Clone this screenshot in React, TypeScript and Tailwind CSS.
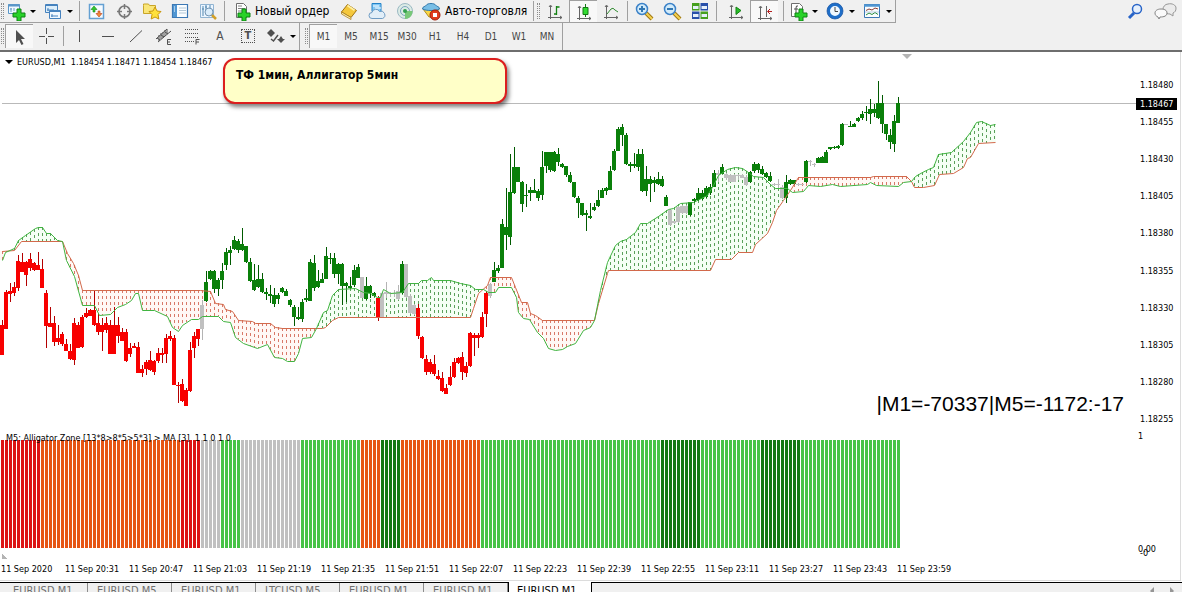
import React from "react";

type Candle = [number, number, number, number, string?];
type Point = [number, number];

const COLORS: Record<string, string> = {
    r: "#f80000",
    g: "#0a800a",
    s: "#c0c0c0",
};

const WICKS: Record<string, string> = {
    r: "#b40000",
    g: "#005a00",
    s: "#b4b4b4",
};

// high, body top, body bottom, low - trend colour carries on until the next letter
const CANDLES: Candle[] = [
    [320, 325, 355, 355, "r"], [290, 292, 329, 329], [283, 291, 294, 302], [282, 287, 293, 296], [255, 261, 288, 291],
    [253, 262, 272, 272], [261, 262, 275, 286], [253, 259, 268, 271], [262, 263, 270, 271], [252, 265, 270, 270],
    [259, 269, 288, 288], [290, 293, 326, 348], [307, 323, 327, 327], [316, 323, 342, 346], [325, 338, 342, 345],
    [332, 334, 344, 346], [339, 344, 351, 351], [344, 351, 359, 360], [318, 323, 360, 365], [322, 325, 348, 348],
    [315, 317, 347, 348], [308, 313, 317, 318], [309, 310, 316, 316], [290, 310, 325, 326], [313, 323, 332, 335],
    [318, 325, 332, 351], [317, 323, 330, 333], [320, 325, 354, 354], [307, 325, 354, 354], [317, 325, 336, 343],
    [328, 332, 341, 341], [329, 332, 361, 362], [343, 348, 354, 357], [343, 346, 348, 348], [342, 347, 373, 373],
    [365, 369, 373, 377], [360, 362, 369, 375], [351, 360, 370, 371], [360, 361, 372, 375], [348, 353, 361, 363],
    [348, 353, 355, 363], [334, 338, 354, 363], [331, 336, 339, 341], [335, 338, 385, 385], [382, 385, 386, 403],
    [379, 384, 401, 402], [388, 390, 406, 406], [342, 350, 391, 392], [332, 336, 348, 358], [329, 329, 339, 346],
    [300, 305, 329, 340, "s"], [271, 282, 301, 302, "g"], [270, 271, 279, 280], [270, 271, 289, 293], [278, 280, 289, 296],
    [263, 271, 280, 289], [248, 252, 265, 270], [246, 250, 253, 265], [236, 240, 249, 250], [239, 241, 250, 253],
    [228, 244, 250, 251], [246, 246, 262, 263], [258, 262, 281, 282], [264, 280, 290, 291], [265, 279, 287, 288],
    [273, 279, 292, 293], [288, 292, 294, 300], [285, 294, 296, 303], [288, 295, 304, 307], [293, 295, 299, 304],
    [287, 288, 292, 293], [289, 291, 296, 296], [299, 300, 305, 307], [305, 307, 317, 326], [307, 317, 319, 320],
    [299, 302, 319, 322], [289, 298, 300, 302], [259, 262, 301, 301], [255, 263, 288, 291], [270, 281, 287, 288],
    [273, 279, 283, 283], [247, 256, 279, 279], [253, 258, 259, 264], [253, 258, 274, 278], [263, 264, 274, 284],
    [263, 264, 286, 305], [282, 283, 286, 302], [277, 286, 288, 289], [265, 270, 285, 287], [264, 267, 278, 278],
    [277, 277, 298, 298, "s"], [277, 286, 299, 300, "g"], [285, 286, 293, 298], [292, 293, 296, 297], [296, 298, 318, 321, "r"],
    [292, 293, 317, 317, "s"], [282, 292, 294, 298], [292, 293, 294, 297], [290, 293, 294, 297], [285, 291, 299, 300],
    [261, 264, 293, 294, "g"], [264, 264, 297, 298, "s"], [294, 296, 313, 314], [304, 305, 314, 315], [304, 308, 336, 339, "r"],
    [336, 337, 358, 359], [355, 359, 372, 375], [359, 362, 372, 374], [355, 364, 374, 376], [370, 376, 379, 380],
    [372, 378, 391, 392], [384, 388, 394, 394], [366, 377, 385, 386], [358, 362, 377, 378], [357, 358, 363, 364],
    [352, 357, 372, 380], [362, 366, 373, 377], [332, 333, 366, 367], [333, 335, 338, 356], [333, 335, 338, 348],
    [312, 317, 337, 338], [291, 293, 314, 327], [283, 284, 296, 298, "s"], [262, 270, 282, 282, "g"], [265, 268, 271, 273],
    [219, 224, 268, 268], [188, 227, 235, 250], [154, 192, 237, 245], [147, 167, 193, 194], [167, 167, 182, 182],
    [181, 182, 204, 212], [184, 195, 196, 207], [187, 190, 193, 201], [179, 190, 193, 193], [189, 191, 198, 201],
    [151, 167, 195, 200], [152, 152, 166, 173], [152, 152, 170, 172], [151, 152, 171, 172], [148, 154, 162, 166],
    [163, 164, 167, 168], [166, 166, 175, 177], [172, 175, 182, 183], [182, 182, 197, 198], [196, 198, 203, 218],
    [203, 203, 215, 216], [210, 213, 215, 231], [203, 216, 218, 219], [203, 207, 210, 211], [190, 200, 206, 207],
    [188, 190, 198, 198], [187, 188, 191, 195], [166, 171, 190, 190], [149, 151, 170, 171], [127, 129, 151, 151],
    [124, 127, 135, 146], [133, 135, 164, 165], [162, 164, 166, 172], [153, 164, 166, 168], [149, 154, 167, 171],
    [149, 154, 191, 192], [166, 179, 191, 196], [176, 179, 184, 202], [177, 180, 183, 192], [172, 179, 184, 185],
    [176, 179, 186, 187], [195, 197, 206, 206], [209, 210, 225, 226, "s"], [221, 221, 223, 224], [206, 207, 222, 223],
    [205, 206, 213, 214], [205, 206, 213, 214], [202, 202, 215, 216, "g"], [198, 199, 201, 203], [188, 193, 200, 201],
    [190, 193, 199, 200], [186, 188, 197, 198], [184, 187, 193, 195], [170, 173, 187, 187], [170, 173, 175, 182, "s"],
    [164, 167, 174, 174, "g"], [173, 174, 178, 180, "s"], [174, 175, 182, 182], [174, 175, 182, 182], [174, 175, 176, 180],
    [174, 175, 178, 178], [175, 177, 185, 186], [171, 172, 182, 183, "g"], [162, 164, 171, 173], [163, 164, 170, 173],
    [166, 169, 174, 175], [172, 173, 177, 178], [172, 176, 181, 182], [183, 184, 185, 186, "s"], [179, 184, 185, 188],
    [185, 187, 198, 199], [175, 182, 198, 203, "g"], [179, 180, 184, 185], [180, 180, 184, 185], [183, 184, 185, 186, "s"],
    [184, 184, 185, 185], [160, 161, 182, 183, "g"], [160, 161, 162, 166, "s"], [163, 164, 165, 167], [157, 158, 163, 163, "g"],
    [156, 157, 163, 163], [150, 152, 163, 163], [147, 147, 149, 150], [146, 147, 148, 149], [145, 146, 148, 149],
    [123, 124, 145, 146], [124, 124, 125, 125, "s"], [121, 126, 127, 127, "g"], [123, 124, 127, 127], [117, 118, 121, 122],
    [111, 114, 118, 120], [106, 112, 113, 121], [99, 109, 114, 124], [104, 109, 113, 117], [81, 103, 118, 119],
    [95, 103, 124, 133], [124, 124, 134, 140], [129, 135, 142, 149], [115, 121, 144, 152], [97, 103, 123, 123],
];

const FAST: Point[] = [
    [2, 260], [5, 252], [14, 248], [18, 240], [25, 235], [35, 228], [38, 227], [42, 227], [46, 233], [50, 233], [57, 240],
    [62, 241], [66, 260], [74, 276], [82, 305], [94, 305], [99, 315], [110, 314], [117, 307], [125, 304], [131, 300],
    [135, 293], [138, 293], [142, 310], [154, 310], [167, 316], [172, 327], [178, 331], [182, 325], [191, 319], [198, 319],
    [202, 316], [218, 316], [223, 321], [230, 322], [235, 337], [243, 343], [257, 348], [267, 344], [274, 357], [282, 358],
    [287, 361], [294, 361], [298, 353], [302, 338], [311, 337], [316, 328], [323, 312], [327, 310], [332, 295], [338, 289],
    [355, 288], [363, 292], [370, 293], [377, 297], [380, 297], [383, 289], [390, 293], [402, 292], [408, 283], [418, 283],
    [421, 280], [427, 280], [431, 277], [433, 280], [450, 280], [460, 283], [470, 285], [475, 289], [483, 289], [488, 292],
    [495, 292], [498, 287], [511, 287], [516, 297], [518, 312], [523, 318], [529, 319], [537, 332], [543, 338], [548, 348],
    [555, 350], [562, 349], [567, 346], [575, 343], [583, 330], [590, 327], [594, 320], [600, 290], [607, 262], [615, 245],
    [620, 241], [626, 239], [635, 232], [640, 223], [647, 223], [658, 216], [668, 209], [673, 208], [680, 203], [693, 202],
    [707, 195], [713, 185], [718, 175], [727, 169], [735, 167], [742, 168], [748, 172], [753, 176], [763, 177], [770, 184],
    [775, 188], [787, 188], [792, 192], [803, 191], [808, 185], [820, 186], [832, 184], [840, 186], [867, 184], [870, 182],
    [876, 185], [898, 186], [903, 182], [911, 181], [915, 176], [922, 172], [928, 169], [933, 167], [938, 154], [951, 152],
    [963, 141], [970, 132], [976, 122], [981, 121], [990, 125], [995, 124],
];

const SLOW: Point[] = [
    [2, 251], [14, 250], [21, 241], [62, 241], [67, 253], [73, 263], [78, 275], [82, 290], [200, 290], [210, 291], [215, 303],
    [223, 304], [225, 309], [232, 311], [238, 320], [252, 321], [255, 323], [270, 323], [275, 327], [282, 328], [322, 328],
    [325, 327], [332, 320], [338, 317], [470, 317], [473, 308], [478, 293], [487, 285], [490, 277], [511, 277], [515, 287],
    [521, 302], [527, 302], [530, 313], [535, 315], [542, 320], [594, 320], [598, 303], [607, 273], [608, 270], [710, 270],
    [715, 259], [731, 259], [738, 252], [752, 252], [755, 244], [767, 233], [772, 222], [776, 210], [783, 200], [790, 190],
    [798, 177], [870, 177], [873, 176], [906, 176], [911, 181], [914, 187], [923, 187], [934, 185], [939, 174], [953, 173],
    [963, 167], [967, 158], [970, 157], [978, 143], [995, 142],
];

// colour, number of bars
const ZONES: [string, number][] = [
    ["#dc1414", 10], ["#e65514", 35], ["#dc1414", 5], ["#c0c0c0", 5], ["#46c346", 5], ["#c0c0c0", 15], ["#46c346", 15],
    ["#e65514", 5], ["#147814", 5], ["#e65514", 20], ["#46c346", 45], ["#147814", 10], ["#46c346", 15], ["#147814", 10],
    ["#46c346", 25],
];

const PRICES = ["1.18480", "1.18455", "1.18430", "1.18405", "1.18380", "1.18355", "1.18330", "1.18305", "1.18280", "1.18255"];
const TIMES = ["2020", "20:31", "20:47", "21:03", "21:19", "21:35", "21:51", "22:07", "22:23", "22:39", "22:55", "23:11", "23:27", "23:43", "23:59"];
const PERIODS = ["M1", "M5", "M15", "M30", "H1", "H4", "D1", "W1", "MN"];
const TABS = ["EURUSD,M1", "EURUSD,M5", "EURUSD,M1", "LTCUSD,M5", "EURUSD,M1", "EURUSD,M1", "EURUSD,M1"];

const valueAt = (line: Point[], x: number) => {
    for (let i = 1; i < line.length; i++) {
        const [x0, y0] = line[i - 1];
        const [x1, y1] = line[i];
        if (x <= x1) return y0 + ((y1 - y0) * (x - x0)) / (x1 - x0);
    }
    return line[line.length - 1][1];
};

const toPoints = (line: Point[]) => line.map(([x, y]) => `${x + 0.5},${y + 0.5}`).join(" ");

const Cloud: React.FC = () => {
    const columns = Array.from({ length: 249 }, (_, i) => 2 + i * 4);
    return (
        <g>
            {columns.map((x) => {
                const a = Math.round(valueAt(FAST, x));
                const b = Math.round(valueAt(SLOW, x));
                const up = a < b;
                const top = Math.min(a, b);
                const size = Math.abs(a - b);
                return (
                    <g key={x}>
                        <rect x={x - 2} y={top} width={4} height={size} fill={up ? "#f5fff5" : "#fff8f5"} />
                        <line x1={x + 0.5} x2={x + 0.5} y1={top} y2={top + size} stroke={up ? "#5aa05a" : "#d87868"} strokeDasharray="3 3" />
                    </g>
                );
            })}
        </g>
    );
};

const Candles: React.FC = () => {
    let trend = "r";
    return (
        <g shapeRendering="crispEdges">
            {CANDLES.map(([high, top, bottom, low, color], i) => {
                trend = color || trend;
                return (
                    <g key={i}>
                        <rect x={i * 4 + 2} y={high} width={1} height={low - high} fill={WICKS[trend]} />
                        <rect x={i * 4} y={top} width={4} height={bottom - top} fill={COLORS[trend]} />
                    </g>
                );
            })}
        </g>
    );
};

/* ---------- toolbar pieces ---------- */

const Svg: React.FC<{ children: React.ReactNode }> = ({ children }) => (
    <svg className="w-5 h-5 shrink-0" viewBox="0 0 20 20" fill="none">
        {children}
    </svg>
);

const Plus = () => <path d="M11 8h4v4h4v4h-4v4h-4v-4H7v-4h4z" fill="#28d228" stroke="#0f8214" />;
const Axes = () => <path d="M5.5 5v13M3 16.5h14M4 6l1.5-2L7 6M15 15l2 1.5-2 1.5" stroke="#646464" />;
const Arrow = () => <span className="w-0 h-0 border-x-[3px] border-x-transparent border-t-[3px] border-t-black" />;
const Grip = () => <span className="w-[3px] h-4 mx-px border-x border-dotted border-[#8c8c8c]" />;
const Divider = () => <span className="w-px h-5 mx-0.5 bg-[#a0a0a0]" />;

const Tool: React.FC<{ label: string; active?: boolean; children: React.ReactNode }> = ({ label, active, children }) => (
    <button
        type="button"
        aria-label={label}
        className={`w-7 h-full shrink-0 flex items-center justify-center ${active ? "bg-[#f8f8f8] border-l border-t border-[#a0a0a0]" : ""}`}
    >
        {children}
    </button>
);

const DropTool: React.FC<{ label: string; children: React.ReactNode }> = ({ label, children }) => (
    <button type="button" aria-label={label} className="w-[33px] h-full shrink-0 flex items-center gap-1">
        {children}
        <Arrow />
    </button>
);

const Lens: React.FC<{ plus?: boolean }> = ({ plus }) => (
    <Svg>
        <path d="M12 12l6 6" stroke="#a07814" strokeWidth="4" />
        <path d="M12 12l6 6" stroke="#f5d250" strokeWidth="2" />
        <circle cx="8" cy="8" r="5.5" fill="#d2ebfa" stroke="#3c82c8" strokeWidth="1.5" />
        <path d={plus ? "M5 8h6M8 5v6" : "M5 8h6"} stroke="#3278b4" strokeWidth="2" />
    </Svg>
);

const MainToolbar: React.FC = () => (
    <div className="h-[23px] flex items-center">
        <div className="h-full flex items-center border-b border-r border-[#a0a0a0]">
            <Grip />
            <div className="h-full px-px flex items-center gap-1">
                <DropTool label="Новый график">
                    <Svg>
                        <path d="M2.5 3.5h11v9h-11z" fill="#f0f8ff" stroke="#5a96c8" />
                        <path d="M2 4.5h12" stroke="#5a96c8" strokeWidth="2" />
                        <path d="M5 7v4M4 8h2M8 7v3" stroke="#6ea0c8" />
                        <Plus />
                    </Svg>
                </DropTool>
                <DropTool label="Профили">
                    <Svg>
                        <path d="M2.5 3.5h12v8h-12z" fill="#dceefa" stroke="#4682be" />
                        <path d="M2 4.5h13M5 7v3M4 9h7" stroke="#4682be" />
                        <path d="M6.5 9.5h11v8h-11z" fill="#f0f8ff" stroke="#4682be" />
                        <path d="M6 10.5h12M9 13v3M8 15h7" stroke="#4682be" />
                    </Svg>
                </DropTool>
            </div>
            <Divider />
            <Tool label="Обзор рынка">
                <Svg>
                    <path d="M3.5 3.5h14v14h-14z" fill="#f5faff" stroke="#64a0d2" strokeWidth="1.5" />
                    <path d="M8 5l3 3.5H9V11H7V8.500H5z" fill="#32c832" stroke="#148c14" strokeWidth=".6" />
                    <path d="M13 16l-3-3.500h2V10h2v2.500h2z" fill="#f08c3c" stroke="#be3c14" strokeWidth=".6" />
                </Svg>
            </Tool>
            <Tool label="Окно данных">
                <Svg>
                    <circle cx="10.5" cy="10.5" r="5.5" stroke="#787878" strokeWidth="1.7" />
                    <path d="M10.5 3v5M10.5 13v5M3 10.5h5M13 10.5h5" stroke="#787878" strokeWidth="1.5" />
                </Svg>
            </Tool>
            <Tool label="Навигатор">
                <Svg>
                    <path d="M1.5 4.5V3h5l1 1.5h6v8h-12z" fill="#fae678" stroke="#c8a528" />
                    <path d="M13 6l2 4 4 .5-3 3 .8 4.5-3.8-2-3.8 2 .8-4.500-3-3 4-.5z" fill="#ffe13c" stroke="#c8960f" />
                </Svg>
            </Tool>
            <Tool label="Терминал">
                <Svg>
                    <path d="M2.5 3.5h15v13h-15z" fill="#fafdff" stroke="#3c78b4" strokeWidth="1.2" />
                    <path d="M3 4h4v12H3z" fill="#5096d2" />
                    <path d="M9 7h7M9 9.5h7M9 12h7" stroke="#b4c8d7" />
                    <path d="M4 6h1M4 8h1M4 10h1" stroke="#fff" />
                </Svg>
            </Tool>
            <Tool label="Тестер стратегий">
                <Svg>
                    <path d="M2.5 3.5h13v13h-13z" fill="#ebf5ff" stroke="#91b4d2" />
                    <path d="M5 5v10M8 4v6M12 4v4M4 8h2M7 6h2" stroke="#5087af" />
                    <path d="M13 13l5 5" stroke="#d2a028" strokeWidth="2.5" />
                    <circle cx="11" cy="11" r="4" fill="#d7ebfa" fillOpacity=".8" stroke="#7396b4" />
                </Svg>
            </Tool>
            <Divider />
            <button type="button" className="h-full w-[108px] px-1 flex items-center gap-1 whitespace-nowrap text-xs text-black">
                <Svg>
                    <path d="M5.5 2.5h7l3 3v11h-10z" fill="#fff" stroke="#6e6e6e" />
                    <path d="M7 5h4M7 7.5h7M7 10h7M7 12.5h4" stroke="#828282" />
                    <Plus />
                </Svg>
                <span>Новый ордер</span>
            </button>
            <Tool label="MetaEditor">
                <Svg>
                    <path d="M2.5 11l6-7.5 9 6-5.5 7z" fill="#f5c83c" stroke="#a07314" />
                    <path d="M2.5 11l9.5 5.5v2L2.500 13z" fill="#fff0aa" stroke="#a07314" strokeWidth=".7" />
                    <path d="M8.5 4.5l7 4.8" stroke="#fff0a0" strokeWidth="2" />
                </Svg>
            </Tool>
            <Tool label="Облако">
                <Svg>
                    <path d="M5 2.5h9v8H5z" fill="#82c8f5" stroke="#2382c8" />
                    <path d="M6 5h6M8 7h6" stroke="#fff" />
                    <path d="M5 17.5a3 3 0 010-6 4 4 0 017.500-1 3.500 3.500 0 013 7z" fill="#e1eef8" stroke="#6e9bc3" />
                </Svg>
            </Tool>
            <Tool label="Сигналы">
                <Svg>
                    <circle cx="10" cy="10" r="7.5" fill="#dcebe6" stroke="#9bb9c3" />
                    <circle cx="10" cy="10" r="4.5" stroke="#7da5be" />
                    <path d="M10 10v8c5 0 7.5-4 7.5-8" fill="#78c878" />
                    <circle cx="10" cy="10" r="2" fill="#32a050" />
                </Svg>
            </Tool>
            <button type="button" className="h-full w-[112px] pl-0.5 flex items-center gap-1 whitespace-nowrap text-xs text-black">
                <Svg>
                    <path d="M2 8h16l-5 8H8z" fill="#fad746" stroke="#af8c1e" />
                    <path d="M1.5 8c0-3 3-2 4-4s8-2 9 0 4 1 4 4c-4 2-13 2-17 0z" fill="#78bee6" stroke="#3278aa" />
                    <circle cx="14" cy="14" r="5" fill="#e13c1e" stroke="#a01e0a" />
                    <path d="M12 12h4v4h-4z" fill="#fff" />
                </Svg>
                <span>Авто-торговля</span>
            </button>
            <Divider />
            <Grip />
            <Tool label="Бары">
                <Svg>
                    <Axes />
                    <path d="M11.5 5v9M11.5 6h3M9 13h2.5" stroke="#148214" strokeWidth="1.3" />
                </Svg>
            </Tool>
            <Tool label="Свечи" active>
                <Svg>
                    <Axes />
                    <path d="M11.5 2v13" stroke="#147814" />
                    <path d="M9 5.5h5v7H9z" fill="#32dc32" stroke="#147814" />
                </Svg>
            </Tool>
            <Tool label="Линия">
                <Svg>
                    <Axes />
                    <path d="M6 13l4-5q2-2 4 1l3 2" stroke="#328c32" />
                </Svg>
            </Tool>
            <Divider />
            <Tool label="Увеличить"><Lens plus /></Tool>
            <Tool label="Уменьшить"><Lens /></Tool>
            <Tool label="Окна мозаикой">
                <Svg>
                    <path d="M2 2h7.5v7.5H2zM10.5 10.5H18V18h-7.5z" fill="#46a01e" />
                    <path d="M10.5 2H18v7.5h-7.5zM2 10.5h7.5V18H2z" fill="#2850aa" />
                    <path d="M3 5h5.5v3H3zM11.5 5H17v3h-5.5zM3 13h5.5v3H3zM11.5 13H17v3h-5.5z" fill="#e6f0fa" />
                </Svg>
            </Tool>
            <Divider />
            <div className="h-full px-[3px] flex">
                <Tool label="Автопрокрутка">
                    <Svg>
                        <Axes />
                        <path d="M10 6l5 3.5-5 4z" fill="#28be28" stroke="#148214" />
                    </Svg>
                </Tool>
                <Tool label="Сдвиг графика" active>
                    <Svg>
                        <Axes />
                        <path d="M11.5 4v11" stroke="#646464" />
                        <path d="M17 9.5h-4M15 7l-2.5 2.5L15 12" stroke="#b41e1e" />
                    </Svg>
                </Tool>
            </div>
            <Divider />
            <div className="h-full pl-0.5 flex items-center gap-1">
                <DropTool label="Индикаторы">
                    <Svg>
                        <path d="M3.5 2.5h8l3 3v10h-11z" fill="#fff" stroke="#6e6e6e" />
                        <path d="M10 5q-2-1-2 2v5M6 8h4" stroke="#505050" />
                        <Plus />
                    </Svg>
                </DropTool>
                <DropTool label="Периоды">
                    <Svg>
                        <circle cx="10" cy="10" r="6.5" fill="#f0f8ff" stroke="#1e6ec8" strokeWidth="3" />
                        <circle cx="10" cy="10" r="8" stroke="#1450a0" strokeWidth=".7" />
                        <path d="M10 6v4.5h3" stroke="#464646" />
                    </Svg>
                </DropTool>
                <DropTool label="Шаблоны">
                    <Svg>
                        <path d="M2.5 3.5h15v13h-15z" fill="#fafdff" stroke="#3c78b4" />
                        <path d="M2 4.5h16" stroke="#5096d2" strokeWidth="2.5" />
                        <path d="M4 9.5l3-1.5 3 1 3-2 3 1" stroke="#8c3c32" />
                        <path d="M4 14l3-2 3 1.5 3-2 3 2" stroke="#288c3c" />
                        <path d="M3 11h14" stroke="#96b4d2" strokeWidth=".6" />
                    </Svg>
                </DropTool>
            </div>
        </div>
        <div className="ml-auto mr-1 flex items-center gap-2">
            <button type="button" aria-label="Поиск">
                <Svg>
                    <path d="M8 11l-5 5" stroke="#2864c8" strokeWidth="3" />
                    <circle cx="11" cy="7" r="4.5" fill="#e6f0fc" stroke="#2864c8" strokeWidth="1.5" />
                </Svg>
            </button>
            <button type="button" aria-label="Чат">
                <svg className="w-6 h-5" viewBox="0 0 24 20">
                    <path d="M14 2c4-1 8 1 8 4s-1 4-3 5v3l-3-2c-5 0-7-3-7-5s2-5 5-5z" fill="#ebebeb" stroke="#969696" />
                    <path d="M7 7c3 0 6 1 6 4s-3 4-7 4l-1 2-1-2c-2-1-3-2-3-4s2-4 6-4z" fill="#fafafa" stroke="#828282" />
                </svg>
            </button>
        </div>
    </div>
);

const LineToolbar: React.FC = () => (
    <div className="h-[27px] flex items-center">
        <div className="h-full pb-0.5 pt-px flex items-center border-r border-[#a0a0a0]">
            <Grip />
            <Tool label="Курсор" active>
                <Svg><path d="M6 3v13l3-3 2.5 5 2-1-2.500-5h4z" fill="#505050" /></Svg>
            </Tool>
            <Tool label="Перекрестие">
                <Svg><path d="M9.5 2v6M9.5 12v6M2 10.5h6M11 10.5h6" stroke="#505050" /></Svg>
            </Tool>
            <Divider />
            <Tool label="Вертикальная линия">
                <Svg><path d="M9.5 4v12" stroke="#505050" /></Svg>
            </Tool>
            <Tool label="Горизонтальная линия">
                <Svg><path d="M4 10.5h12" stroke="#505050" /></Svg>
            </Tool>
            <Tool label="Трендовая линия">
                <Svg><path d="M4 16L16 4.500" stroke="#505050" /></Svg>
            </Tool>
            <Tool label="Канал">
                <Svg>
                    <path d="M2 13L13 3M4 16L17 5M5 9v6M7 7v6M9 6v6M11 4v6M13 3v5M3 12l3 2M7 9l3 2M11 6l3 2" stroke="#505050" />
                    <path d="M17 13.5h-3.500v5H17M13.500 16H16" stroke="#505050" />
                </Svg>
            </Tool>
            <Tool label="Фибоначчи">
                <Svg>
                    <path d="M3 3.5h13M3 7.5h13M3 11.5h13M3 15.5h9" stroke="#505050" strokeDasharray="1 1" />
                    <path d="M17.5 13.5H14v5M14 16h3" stroke="#505050" />
                </Svg>
            </Tool>
            <button type="button" className="w-7 text-xs text-[#505050]">A</button>
            <button type="button" className="w-7 flex justify-center">
                <span className="size-[14px] border border-dotted border-[#505050] text-[11px] leading-3 font-bold text-[#505050]">T</span>
            </button>
            <button type="button" aria-label="Стрелки" className="w-[37px] pl-1 flex items-center gap-1">
                <Svg>
                    <path d="M1 7l4-4 4 4-4 4zM11 13h8l-4 4zM13 13l2-3 2 3" fill="#505050" />
                    <path d="M5 13l2.500 2L12 9" stroke="#505050" strokeWidth="1.5" />
                </Svg>
                <Arrow />
            </button>
        </div>
        <div className="h-full pb-0.5 pt-px pl-1 pr-px flex items-center border-r border-[#a0a0a0]">
            <Grip />
            {PERIODS.map((period, i) => (
                <button
                    key={period}
                    type="button"
                    className={`w-7 h-full text-[10px] text-[#464646] ${i === 0 ? "bg-[#f8f8f8] border-l border-t border-[#a0a0a0]" : ""}`}
                >
                    {period}
                </button>
            ))}
        </div>
    </div>
);

const App: React.FC = () => {
    let bar = 0;
    return (
        <div className="h-screen overflow-hidden bg-white text-black font-['DejaVu_Sans_Condensed','Noto_Sans',sans-serif]">
            <header className="bg-[#f0f0f0] border-b-2 border-[#6e6e6e]">
                <MainToolbar />
                <LineToolbar />
            </header>

            <main className="mr-px border-r border-[#dcdcdc] text-[9px] leading-3">
                {/* Price chart */}
                <section className="flex h-[380px]">
                    <div className="relative flex-1 min-w-0">
                        <svg className="block w-full h-full">
                            <g transform="translate(0 -52)">
                                <path d="M902 54h10l-5 5z" fill="#b4b4b4" />
                                <path d="M5 60h8l-4 4z" fill="#000" />
                                <rect x="2" y="103" width="100%" height="1" fill="#b9b9b9" />
                                <Cloud />
                                <Candles />
                                <polyline points={toPoints(SLOW)} fill="none" stroke="#d2694b" />
                                <polyline points={toPoints(FAST)} fill="none" stroke="#41b441" />
                            </g>
                        </svg>
                        <p className="absolute left-[17px] top-1 whitespace-pre">EURUSD,M1  1.18454 1.18471 1.18454 1.18467</p>
                        <div className="absolute left-[223px] top-[6px] w-[284px] h-[46px] px-[11px] py-[7px] rounded-xl border-2 border-[#dc1e1e] bg-[#ffffc8] text-xs leading-4 font-bold shadow-[2px_3px_4px_#00000080]">
                            ТФ 1мин, Аллигатор 5мин
                        </div>
                        <p className="absolute right-3 bottom-4 text-[21px] leading-6 font-['Liberation_Sans',sans-serif]">|M1=-70337|M5=-1172:-17</p>
                    </div>
                    <div className="relative w-11 pt-[27px] pb-[7px]">
                        <ul className="h-full pl-1 flex flex-col justify-between">
                            {PRICES.map((price) => (
                                <li key={price}>{price}</li>
                            ))}
                        </ul>
                        <span className="absolute left-0 top-[46px] w-[41px] pl-1 bg-black text-white">1.18467</span>
                    </div>
                </section>

                {/* Alligator zones */}
                <section className="flex h-[127px]">
                    <div className="relative flex-1 min-w-0">
                        <svg className="block w-full h-full" shapeRendering="crispEdges">
                            {ZONES.map(([color, count], z) => {
                                const start = bar;
                                bar += count;
                                return Array.from({ length: count }, (_, i) => (
                                    <rect key={`${z}-${i}`} x={(start + i) * 4 + 1} y={8} width={3} height={108} fill={color} />
                                ));
                            })}
                            <path d="M2 122v5h5z" fill="#b4b4b4" />
                        </svg>
                        <p className="absolute left-[6px] top-0 whitespace-pre">M5: Alligator Zone [13*8&gt;8*5&gt;5*3] &gt; MA [3]  1 1 0 1 0</p>
                    </div>
                    <div className="relative w-11 pl-0.5 pb-[6px] flex flex-col justify-between leading-2">
                        <span>1</span>
                        <span>0.00</span>
                        <span className="absolute left-1 bottom-0.5">-0</span>
                    </div>
                </section>

                <ul className="h-[22px] pl-px pt-1 flex border-b border-[#dcdcdc] overflow-hidden">
                    {TIMES.map((time) => (
                        <li key={time} className="w-16 shrink-0 whitespace-nowrap">11 Sep {time}</li>
                    ))}
                </ul>
            </main>

            <nav className="h-6 mt-px flex bg-[#f0f0f0] text-[11px] leading-4 text-[#6e6e6e]">
                <span className="w-1 border-t border-black" />
                {TABS.map((tab, i) => (
                    <button
                        key={i}
                        type="button"
                        className={
                            i === TABS.length - 1
                                ? "w-[84px] pt-px pl-2 flex items-start bg-white text-black border-x border-black"
                                : "w-[84px] pl-[9px] flex items-start border-t border-black"
                        }
                    >
                        <span className={i === TABS.length - 1 ? "" : "w-full text-left border-r border-[#8c8c8c]"}>{tab}</span>
                    </button>
                ))}
                <span className="flex-1 border-t border-black flex justify-end gap-4 pr-2 pt-1">
                    <svg className="w-1 h-2" viewBox="0 0 4 8"><path d="M4 0v8L0 4z" fill="#969696" /></svg>
                    <svg className="w-1 h-2" viewBox="0 0 4 8"><path d="M0 0v8l4-4z" fill="#969696" /></svg>
                </span>
            </nav>
        </div>
    );
};

export default App;
